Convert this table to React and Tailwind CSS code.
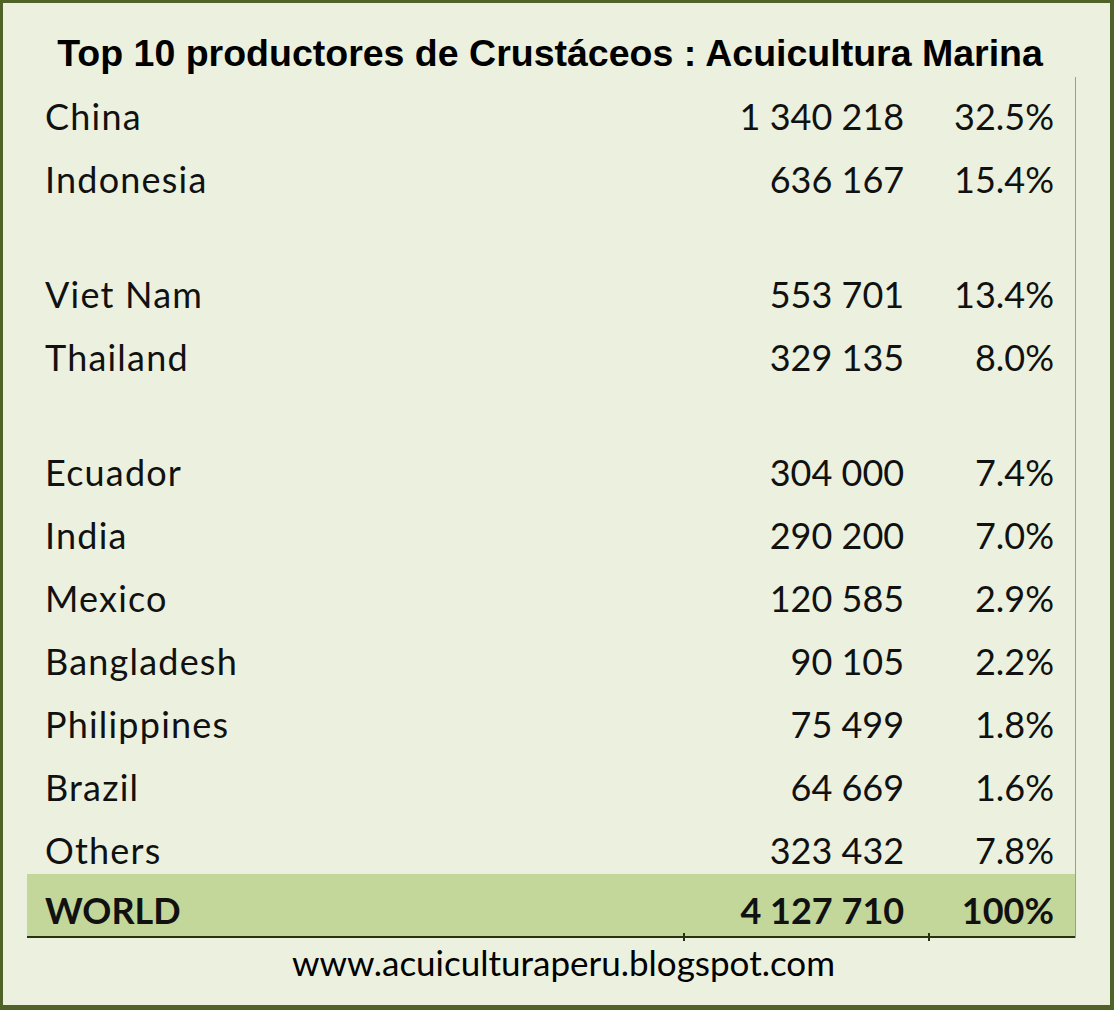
import React from "react";

const rows = [
  { n: "China", v: "1 340 218", p: "32.5%" },
  { n: "Indonesia", v: "636 167", p: "15.4%" },
  { spacer: true },
  { n: "Viet Nam", v: "553 701", p: "13.4%" },
  { n: "Thailand", v: "329 135", p: "8.0%" },
  { spacer: true },
  { n: "Ecuador", v: "304 000", p: "7.4%" },
  { n: "India", v: "290 200", p: "7.0%" },
  { n: "Mexico", v: "120 585", p: "2.9%" },
  { n: "Bangladesh", v: "90 105", p: "2.2%" },
  { n: "Philippines", v: "75 499", p: "1.8%" },
  { n: "Brazil", v: "64 669", p: "1.6%" },
  { n: "Others", v: "323 432", p: "7.8%" },
];

export default function App() {
  return (
    <div
      className="w-[1114px] h-[1010px] bg-[#ebf1de] border-[#4f6228] border-t-[3px] border-l-[3px] border-r-[4px] border-b-[5px] flex flex-col text-[#111111]"
      style={{ fontFamily: "Lato, 'Open Sans', sans-serif" }}
    >
      <div
        className="h-[74px] flex justify-center pt-[32px] text-[37.5px] leading-[37px] font-bold text-black pr-[13px]"
        style={{ fontFamily: "'Liberation Sans', Arial, sans-serif" }}
      >
        Top 10 productores de Crustáceos : Acuicultura Marina
      </div>
      <div className="ml-[24px] w-[1049px] flex flex-col border-r border-[#9b9d8e]">
        {rows.map((r, i) =>
          r.spacer ? (
            <div key={i} className="h-[52px]" />
          ) : (
            <div key={i} className="h-[63px] flex items-end pb-[6px] text-[36px] leading-[36px]">
              <div className="w-[657px] pl-[18px] tracking-[1.2px]">{r.n}</div>
              <div className="w-[245px] text-right pr-[24px]">{r.v}</div>
              <div className="w-[147px] text-right pr-[21px]">{r.p}</div>
            </div>
          )
        )}
        <div className="relative h-[64px] flex items-end pb-[8px] text-[36px] leading-[36px] font-bold bg-[#c4d79b] border-b-2 border-[#27330f]">
          <div className="w-[657px] pl-[18px]">WORLD</div>
          <div className="w-[245px] text-right pr-[24px]">4 127 710</div>
          <div className="w-[147px] text-right pr-[21px]">100%</div>
          <span className="absolute left-[656px] bottom-[-5px] w-[2px] h-[8px] bg-[#27330f]" />
          <span className="absolute left-[901px] bottom-[-5px] w-[2px] h-[8px] bg-[#27330f]" />
        </div>
      </div>
      <div className="flex justify-center pl-[14px] pt-[7px] text-[35px] leading-[35px] text-black">
        www.acuiculturaperu.blogspot.com
      </div>
    </div>
  );
}
